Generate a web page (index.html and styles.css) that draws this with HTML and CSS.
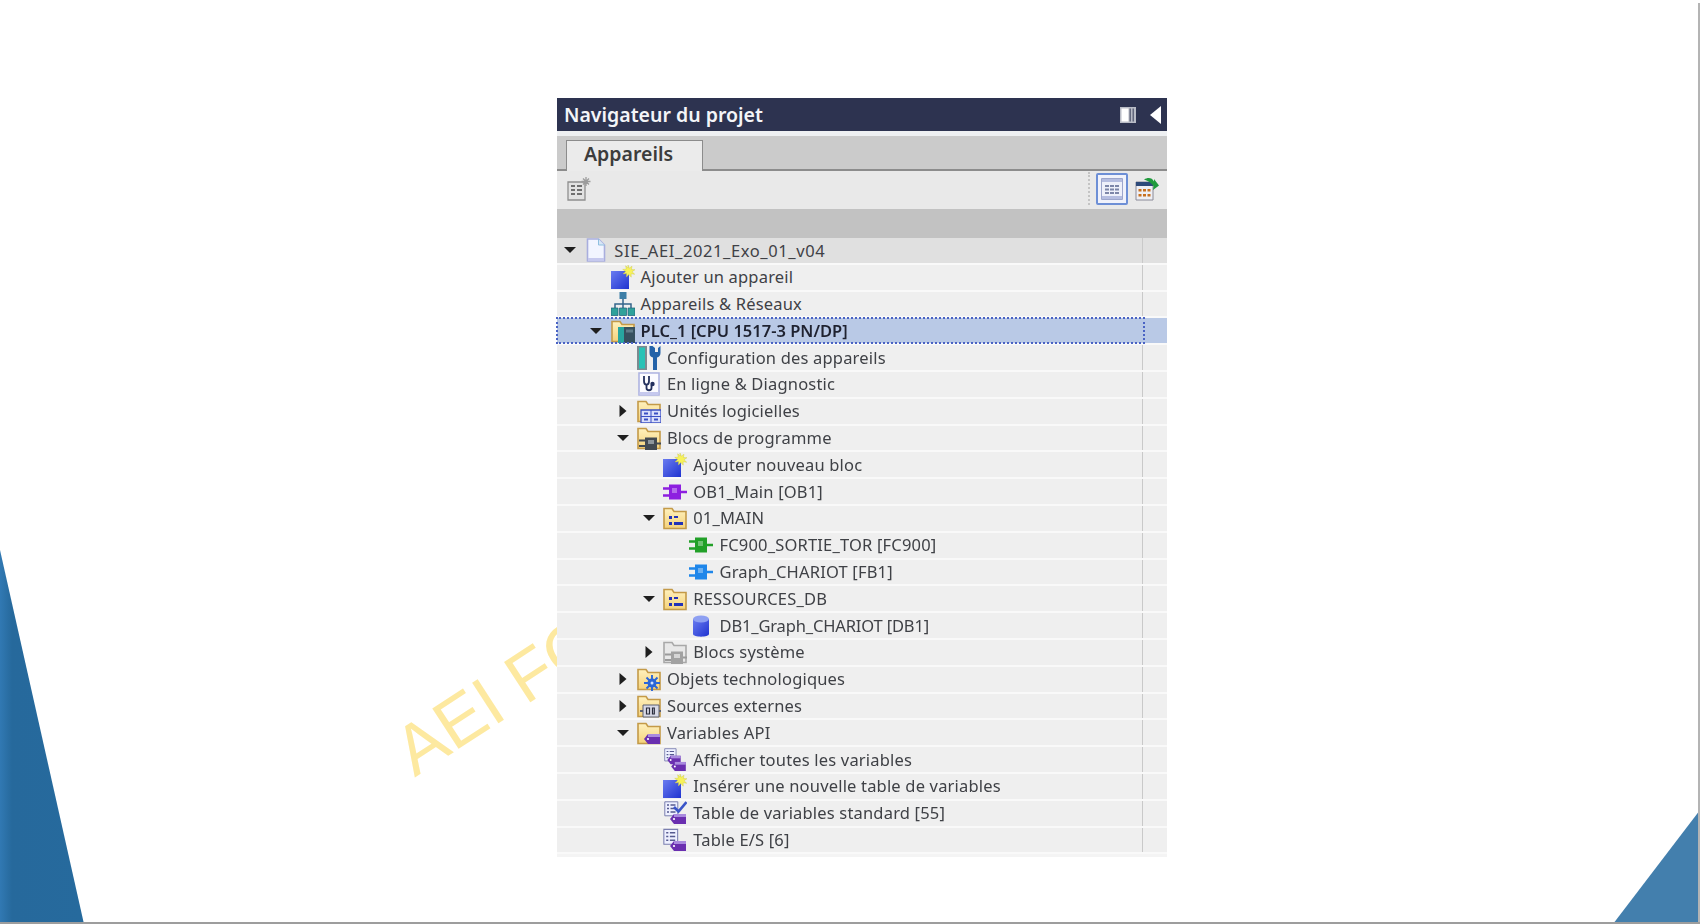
FILE: index.html
```html
<!DOCTYPE html>
<html lang="fr">
<head>
<meta charset="utf-8">
<title>Navigateur du projet</title>
<link rel="stylesheet" href="styles.css">
</head>
<body>
<svg class="defs" width="0" height="0" aria-hidden="true">
  <defs>
    <linearGradient id="fold" x1="0" y1="0" x2="0" y2="1"><stop offset="0" stop-color="#fff1bd"/><stop offset="1" stop-color="#f4d27c"/></linearGradient>
    <linearGradient id="blue" x1="0" y1="0" x2="1" y2="1"><stop offset="0" stop-color="#6a7cf0"/><stop offset="1" stop-color="#1f33d0"/></linearGradient>
    <symbol id="folder" viewBox="0 0 24 24"><path d="M1 22.500V2.500h8l2 3H23v17z" fill="url(#fold)" stroke="#c49a48" stroke-width="1.600"/></symbol>
    <symbol id="add" viewBox="0 0 24 24"><path d="M0 6h18v18H0z" fill="url(#blue)"/><path d="M17 0l1.300 3.200 2.700-2-.6 3.300 3.600.2-3 2 2.700 2.500-3.600-.4.2 3.400-2.500-2.600-2.400 2.500.2-3.500-3.600.3 2.700-2.500-3-2 3.600-.3-.7-3.300 2.800 2z" fill="#f7f25a" stroke="#c9c840" stroke-width=".4"/></symbol>
    <symbol id="plug" viewBox="0 0 24 24"><path d="M0 8.500h7M0 15.500h7M17 12h7" stroke="currentColor" stroke-width="2.600" fill="none"/><path d="M6 4.500h12v15H6z" fill="currentColor"/><path d="M9 8h5v5H9z" fill="#fff" opacity=".35"/></symbol>
    <symbol id="tag" viewBox="0 0 16 12"><path d="M4 1h12v10H4L0 6z" fill="#6a2fb0"/><path d="M4 1h12v3H4z" fill="#a98ade"/><circle cx="4" cy="6" r="1.100" fill="#fff"/></symbol>
    <symbol id="list" viewBox="0 0 16 16"><path d="M.8.800h13v14H.8z" fill="#eef0ff" stroke="#7b7fb0"/><path d="M3 4h2M6.500 4h5M3 7.500h2M6.500 7.500h5M3 11h2M6.500 11h5" stroke="#565a90" stroke-width="1.400"/></symbol>
  </defs>
</svg>

<div class="slide">
  <div class="tri-left"></div>
  <div class="tri-right"></div>
  <div class="edge-right"></div>
  <div class="edge-bottom"></div>
  <div class="watermark">AEI FO</div>

  <section class="panel">
    <header class="title">
      <h1 class="title-text">Navigateur du projet</h1>
      <div class="title-tools">
        <svg class="i-columns" viewBox="0 0 16 16"><path d="M0 0h16v16H0z" fill="#b9bcc6"/><path d="M1.500 1.500h7v13h-7z" fill="#fff"/><path d="M9.500 1.500h1.500v13H9.500zM12.500 1.500h1.500v13h-1.500z" fill="#62677c"/></svg>
        <svg class="i-collapse" viewBox="0 0 11 18"><path d="M11 0v18L0 9z" fill="#fff"/></svg>
      </div>
    </header>
    <div class="strip"></div>
    <nav class="tabs"><div class="tab">Appareils</div></nav>
    <div class="toolbar">
      <svg class="i-tool" viewBox="0 0 24 24"><path d="M1 5h17v18H1z" fill="#e2e2e2" stroke="#8f8f8f" stroke-width="1.300"/><path d="M4 8h4v2H4zM10 8h5v2h-5zM4 12h4v2H4zM10 12h5v2h-5zM4 16h4v2H4zM10 16h5v2h-5z" fill="#6f6f6f"/><path d="M19 0v9M14.500 4.500h9M16 1.500l6 6M22 1.500l-6 6" stroke="#9c9c9c" stroke-width="1.300"/></svg>
      <div class="spacer"></div>
      <div class="tool-sep"></div>
      <div class="tool-btn">
        <svg class="i-view" viewBox="0 0 22 22"><path d="M.5.500h21v21H.5z" fill="#eef0fa" stroke="#9da6cc"/><path d="M1 1h20v3H1zM1 18h20v3H1z" fill="#b5bde0"/><path d="M4 7h4v2H4zM9 7h4v2H9zM14 7h4v2h-4zM4 10.500h4v2H4zM9 10.500h4v2H9zM14 10.500h4v2h-4zM4 14h4v2H4zM9 14h4v2H9zM14 14h4v2h-4z" fill="#7d86a8"/></svg>
      </div>
      <svg class="i-export" viewBox="0 0 24 24"><path d="M1 5h17v18H1z" fill="#efeff4" stroke="#8a8a98"/><path d="M1 5h17v4H1z" fill="#2d4a7a"/><path d="M3.500 12h3v2.500h-3zM8 12h3v2.500H8zM12.500 12h3v2.500h-3zM3.500 17h3v2.500h-3zM8 17h3v2.500H8zM12.500 17h3v2.500h-3z" fill="#c8701e"/><path d="M9 2.500c4-2.500 8-2 10 2V2l5 6.500-6 4.500 .5-4c-2-3-5-5-9.500-6.500z" fill="#1f9a3c"/></svg>
    </div>
    <div class="band"></div>

    <div class="tree">
      <div class="row row-root"><div class="cell l0"><span class="arrow down"></span><svg class="ic" viewBox="0 0 24 24"><path d="M3.500 1h11l6 6v16h-17z" fill="#f2f5ff" stroke="#a9aede" stroke-width="1.600"/><path d="M14.500 1v6h6" fill="#d7e6f6" stroke="#8fc0e0"/><path d="M4 20h16v3H4z" fill="#c6c9ee"/></svg><span class="label label-root">SIE_AEI_2021_Exo_01_v04</span></div><div class="side"></div></div>

      <div class="row"><div class="cell l1"><span class="noarrow"></span><svg class="ic"><use href="#add"/></svg><span class="label">Ajouter un appareil</span></div><div class="side"></div></div>

      <div class="row"><div class="cell l1"><span class="noarrow"></span><svg class="ic" viewBox="0 0 24 24"><path d="M12 7v5M4 16v-4h16v4M12 12v4" fill="none" stroke="#34658c" stroke-width="1.500"/><path d="M8.500 0h7v7h-7z" fill="#3d7ea6"/><path d="M0 16h7v7.500H0zM8.500 16h7v7.500h-7zM17 16h7v7.500h-7z" fill="#2fa19b" stroke="#1f5f78" stroke-width=".7"/></svg><span class="label">Appareils &amp; Réseaux</span></div><div class="side"></div></div>

      <div class="row row-sel"><div class="cell l1 focus"><span class="arrow down"></span><svg class="ic" viewBox="0 0 24 24"><use href="#folder"/><path d="M7 8h17v16H7z" fill="#36505e"/><path d="M7 8h6v16H7z" fill="#27a6a0"/><path d="M15 10.500h7v3h-7z" fill="#5f7b88"/></svg><span class="label label-sel">PLC_1 [CPU 1517-3 PN/DP]</span></div><div class="side"></div></div>

      <div class="row"><div class="cell l2"><span class="noarrow"></span><svg class="ic" viewBox="0 0 24 24"><path d="M0 0h10v24H0z" fill="#7d8a90"/><path d="M2 1.500h6V22.500H2z" fill="#28c2b6"/><path d="M12.500 0v7c0 3 1.700 4 3.500 4.500V24h4V11.500c2-.6 3.500-2 3.500-4.500V0l-2.500 2v4h-3V2l-2.500-2z" fill="#2463a8"/></svg><span class="label">Configuration des appareils</span></div><div class="side"></div></div>

      <div class="row"><div class="cell l2"><span class="noarrow"></span><svg class="ic" viewBox="0 0 24 24"><path d="M2 1h20v22H2z" fill="#fbfbff" stroke="#aeb4e2" stroke-width="1.600"/><path d="M2.500 20h19v3h-19z" fill="#c6c9ee"/><path d="M7 4v5c0 5 5 5 5 0V4M9.500 13v3c0 3 5 3 5 0v-3" fill="none" stroke="#23305e" stroke-width="1.800"/><circle cx="15.500" cy="12" r="2.200" fill="#23305e"/></svg><span class="label">En ligne &amp; Diagnostic</span></div><div class="side"></div></div>

      <div class="row"><div class="cell l2"><span class="arrow right"></span><svg class="ic" viewBox="0 0 24 24"><use href="#folder"/><path d="M4 11h20v13H4z" fill="#dbe0fb" stroke="#3b4fc4" stroke-width="1.300"/><path d="M14 11v13M4 17.500h20" stroke="#3b4fc4"/><path d="M7 13.500h4v2H7zM17 13.500h4v2h-4zM7 19.500h4v2H7zM17 19.500h4v2h-4z" fill="#3b4fc4"/></svg><span class="label">Unités logicielles</span></div><div class="side"></div></div>

      <div class="row"><div class="cell l2"><span class="arrow down"></span><svg class="ic" viewBox="0 0 24 24"><use href="#folder"/><path d="M2 14.500h7M2 20h7M19 17.500h5" stroke="#434a52" stroke-width="2.200"/><path d="M8 11.500h12V24H8z" fill="#434a52"/><path d="M11 14h6v4h-6z" fill="#8e969c"/></svg><span class="label">Blocs de programme</span></div><div class="side"></div></div>

      <div class="row"><div class="cell l3"><span class="noarrow"></span><svg class="ic"><use href="#add"/></svg><span class="label">Ajouter nouveau bloc</span></div><div class="side"></div></div>

      <div class="row"><div class="cell l3"><span class="noarrow"></span><svg class="ic ic-ob"><use href="#plug"/></svg><span class="label">OB1_Main [OB1]</span></div><div class="side"></div></div>

      <div class="row"><div class="cell l3"><span class="arrow down"></span><svg class="ic" viewBox="0 0 24 24"><use href="#folder"/><path d="M6 10h3v3H6zM6 16h3v3H6zM11 16h9v3h-9zM11 10h4v2h-4z" fill="#2233b8"/></svg><span class="label">01_MAIN</span></div><div class="side"></div></div>

      <div class="row"><div class="cell l4"><span class="noarrow"></span><svg class="ic ic-fc"><use href="#plug"/></svg><span class="label">FC900_SORTIE_TOR [FC900]</span></div><div class="side"></div></div>

      <div class="row"><div class="cell l4"><span class="noarrow"></span><svg class="ic ic-fb"><use href="#plug"/></svg><span class="label">Graph_CHARIOT [FB1]</span></div><div class="side"></div></div>

      <div class="row"><div class="cell l3"><span class="arrow down"></span><svg class="ic" viewBox="0 0 24 24"><use href="#folder"/><path d="M6 10h3v3H6zM6 16h3v3H6zM11 16h9v3h-9zM11 10h4v2h-4z" fill="#2233b8"/></svg><span class="label">RESSOURCES_DB</span></div><div class="side"></div></div>

      <div class="row"><div class="cell l4"><span class="noarrow"></span><svg class="ic" viewBox="0 0 24 24"><path d="M4 5v15c0 3.500 16 3.500 16 0V5z" fill="url(#blue)"/><ellipse cx="12" cy="5" rx="8" ry="3.500" fill="#8ea0f2"/></svg><span class="label label-tight">DB1_Graph_CHARIOT [DB1]</span></div><div class="side"></div></div>

      <div class="row"><div class="cell l3"><span class="arrow right"></span><svg class="ic" viewBox="0 0 24 24"><path d="M1 22.500V2.500h8l2 3H23v17z" fill="#e8e8e8" stroke="#a8a8a8" stroke-width="1.600"/><path d="M2 14.500h7M2 20h7M19 17.500h5" stroke="#9a9a9a" stroke-width="2.200"/><path d="M8 11.500h12V24H8z" fill="#a2a2a2"/><path d="M11 14h6v4h-6z" fill="#d6d6d6"/></svg><span class="label">Blocs système</span></div><div class="side"></div></div>

      <div class="row"><div class="cell l2"><span class="arrow right"></span><svg class="ic" viewBox="0 0 24 24"><use href="#folder"/><circle cx="15" cy="16" r="4.500" fill="#2a66d8"/><path d="M15 8v16M7 16h16M9.500 10.500l11 11M20.500 10.500l-11 11" stroke="#2a66d8" stroke-width="1.900"/><circle cx="15" cy="16" r="1.500" fill="#cfe0ff"/></svg><span class="label">Objets technologiques</span></div><div class="side"></div></div>

      <div class="row"><div class="cell l2"><span class="arrow right"></span><svg class="ic" viewBox="0 0 24 24"><use href="#folder"/><path d="M6 11h16v12H6z" fill="#d7d9e6" stroke="#5c6070"/><path d="M3 17h3M22 17h2" stroke="#5c6070" stroke-width="2"/><path d="M9.500 14h3v6h-3zM15.500 14h1.800v6h-1.800z" fill="none" stroke="#2a2d3d" stroke-width="1.200"/></svg><span class="label">Sources externes</span></div><div class="side"></div></div>

      <div class="row"><div class="cell l2"><span class="arrow down"></span><svg class="ic" viewBox="0 0 24 24"><use href="#folder"/><use href="#tag" x="6" y="12" width="18" height="12"/></svg><span class="label">Variables API</span></div><div class="side"></div></div>

      <div class="row"><div class="cell l3"><span class="noarrow"></span><svg class="ic" viewBox="0 0 24 24"><use href="#list" x="1" y="0" width="14" height="14"/><use href="#tag" x="3" y="7" width="16" height="10"/><use href="#tag" x="7" y="13" width="17" height="11"/></svg><span class="label">Afficher toutes les variables</span></div><div class="side"></div></div>

      <div class="row"><div class="cell l3"><span class="noarrow"></span><svg class="ic"><use href="#add"/></svg><span class="label">Insérer une nouvelle table de variables</span></div><div class="side"></div></div>

      <div class="row"><div class="cell l3"><span class="noarrow"></span><svg class="ic" viewBox="0 0 24 24"><use href="#list" x="1" y="0" width="16" height="16"/><path d="M11 6l4.500 4.500L23.500 1" fill="none" stroke="#3a55c8" stroke-width="2.700"/><use href="#tag" x="6" y="12" width="18" height="12"/></svg><span class="label">Table de variables standard [55]</span></div><div class="side"></div></div>

      <div class="row"><div class="cell l3"><span class="noarrow"></span><svg class="ic" viewBox="0 0 24 24"><use href="#list" x="0" y="0" width="17" height="18"/><use href="#tag" x="6" y="12" width="18" height="12"/></svg><span class="label">Table E/S [6]</span></div><div class="side"></div></div>
    </div>
    <div class="tree-end"></div>
  </section>
</div>
</body>
</html>
```
FILE: styles.css
```css
* { box-sizing: border-box; }
html, body { margin: 0; height: 100%; background: #fff; overflow: hidden; }
.defs { position: absolute; }

.slide {
  position: relative;
  width: 1700px;
  height: 924px;
  padding: 98px 0 0 557px;
  background: #fff;
  overflow: hidden;
  font-family: "Noto Sans", "Open Sans", sans-serif;
}

.tri-left {
  position: absolute; left: 0; top: 550px; width: 84px; height: 374px;
  background: linear-gradient(90deg, #3179b3 0, #26699c 12px, #266a9d 100%);
  clip-path: polygon(0 0, 100% 100%, 0 100%);
}
.tri-right {
  position: absolute; left: 1613px; top: 810px; width: 87px; height: 114px;
  background: #437fad;
  clip-path: polygon(100% 0, 100% 100%, 0 100%);
}
.edge-right {
  position: absolute; right: 0; top: 3px; bottom: 0; width: 2px;
  background: #b4b4b4;
}
.edge-bottom {
  position: absolute; left: 0; right: 0; bottom: 0; height: 2px;
  background: #9d9d9d;
}
.watermark {
  position: absolute; left: 413px; top: 719px;
  font: 70px/70px "Liberation Sans", sans-serif;
  color: #fde9a0;
  white-space: nowrap;
  transform-origin: 0 56px;
  transform: rotate(-33deg);
}

.panel {
  position: relative;
  width: 610px;
  background: #fff;
  filter: blur(.45px);
}

.title {
  height: 33px;
  padding: 0 6px 0 7px;
  background: #2d3350;
  display: flex;
  align-items: center;
  justify-content: space-between;
}
.title-text {
  margin: 0;
  font-size: 19.500px;
  font-weight: 600;
  color: #f4f5f8;
  letter-spacing: 0;
}
.title-tools { display: flex; align-items: center; gap: 14px; }
.i-columns { width: 16px; height: 16px; }
.i-collapse { width: 11px; height: 18px; }

.strip { height: 5px; background: #eef0f2; }

.tabs {
  height: 35px;
  padding: 4px 0 0 9px;
  background: #cbcbcb;
  border-bottom: 2px solid #8c8c8c;
}
.tab {
  width: 137px;
  height: 31px;
  padding-left: 17px;
  background: #ebebeb;
  border: 1px solid #8c8c8c;
  border-bottom: 0;
  font-size: 19.500px;
  font-weight: 600;
  line-height: 26px;
  color: #3c3c3c;
}

.toolbar {
  height: 38px;
  padding: 0 8px 3px 10px;
  background: #e9e9e9;
  display: flex;
  align-items: center;
}
.i-tool { width: 24px; height: 24px; }
.spacer { flex: 1; }
.tool-sep { width: 2px; height: 33px; margin-right: 6px; border-left: 2px dotted #c4c4c4; }
.tool-btn {
  width: 32px; height: 32px;
  border: 2px solid #6d8fd6;
  border-radius: 2px;
  background: #f0f2fb;
  display: flex; align-items: center; justify-content: center;
  margin-right: 7px;
}
.i-view { width: 22px; height: 22px; }
.i-export { width: 24px; height: 24px; }

.band { height: 29px; background: #c2c2c2; }

.tree { display: flex; flex-direction: column; }
.row {
  height: 26.800px;
  display: flex;
  background: #efefef;
  border-bottom: 2px solid #f9f9f9;
}
.row-root { background: #e0e0e0; }
.row-sel { background: #b9c9e6; }

.cell {
  width: 585px;
  display: flex;
  align-items: center;
}
.side { flex: 1; border-left: 1.500px solid #c9c9c9; }
.row-sel .side { border-left: 0; }
.tree-end { height: 3px; background: #f4f4f4; }

.l0 { padding-left: 0; }
.l1 { padding-left: 26.300px; }
.l2 { padding-left: 52.600px; }
.l3 { padding-left: 78.900px; }
.l4 { padding-left: 105.200px; }

.focus { width: 587px; outline: 2px dotted #4a63c4; outline-offset: -1px; }

.arrow, .noarrow {
  width: 26.300px;
  height: 12px;
  flex: none;
  display: block;
  position: relative;
}
.arrow::before {
  content: "";
  position: absolute;
  left: 50%;
  top: 50%;
  transform: translate(-50%, -50%);
  border-style: solid;
  border-color: transparent;
}
.down::before { border-width: 6px 6px 0; border-top-color: #1f1f1f; }
.right::before { border-width: 6px 0 6px 7px; border-left-color: #1f1f1f; }

.ic { width: 24px; height: 24px; flex: none; margin: 0 6px 0 1px; }
.ic-ob { color: #8d1fe0; }
.ic-fc { color: #22a028; }
.ic-fb { color: #1e86ea; }

.label {
  font-size: 16.500px;
  line-height: 24px;
  letter-spacing: .18px;
  color: #3f4146;
  white-space: nowrap;
}
.label-root { letter-spacing: .6px; position: relative; top: 1px; }
.label-tight { letter-spacing: -.15px; }
.label-sel { font-weight: 600; color: #1f2230; letter-spacing: 0; }
```
